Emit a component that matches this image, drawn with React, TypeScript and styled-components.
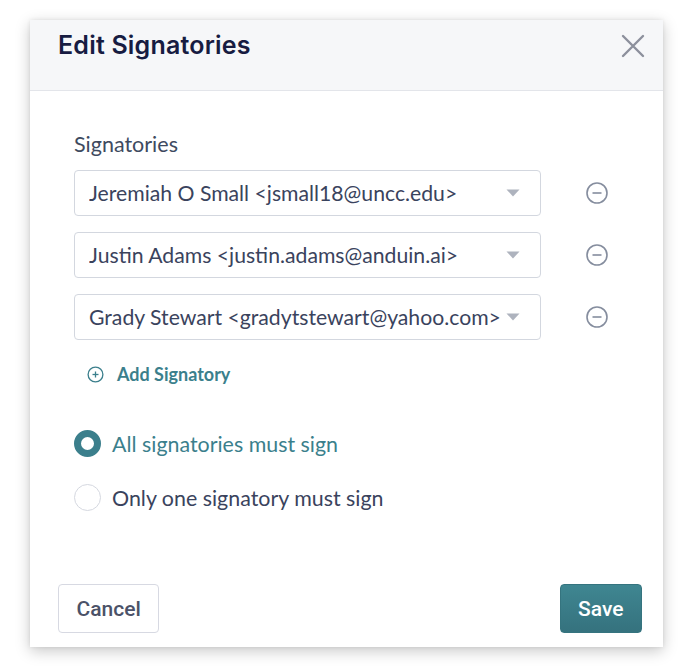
import React from "react";
import styled, { createGlobalStyle } from "styled-components";

const Global = createGlobalStyle`
  html, body { margin: 0; padding: 0; background: #ffffff; }
  body { font-family: Lato, "Noto Sans", sans-serif; }
  * { box-sizing: border-box; }
`;

const Page = styled.div`
  padding: 20px 26px 24px 30px;
`;

const Dialog = styled.div`
  width: 633px;
  background: #ffffff;
  box-shadow: 0 4px 14px rgba(0, 0, 0, 0.22), 0 0 4px rgba(0, 0, 0, 0.08);
  display: flex;
  flex-direction: column;
`;

const Header = styled.div`
  height: 71px;
  background: #f6f7f9;
  border-bottom: 1px solid #e3e5ea;
  display: flex;
  align-items: flex-start;
  justify-content: space-between;
  padding: 10px 16px 0 28px;
`;

const Title = styled.h1`
  margin: 0;
  font-family: Inter, "Noto Sans", sans-serif;
  font-weight: 600;
  font-size: 25px;
  line-height: 30px;
  letter-spacing: 0.2px;
  color: #171c42;
`;

const CloseButton = styled.button`
  border: none;
  background: transparent;
  padding: 0;
  width: 28px;
  height: 28px;
  display: flex;
  align-items: center;
  justify-content: center;
  cursor: pointer;
  margin-top: 2px;
`;

const Body = styled.div`
  padding: 40px 44px 0 44px;
  display: flex;
  flex-direction: column;
`;

const Label = styled.div`
  font-size: 21.5px;
  line-height: 26px;
  color: #3e4a60;
  margin-bottom: 13px;
`;

const Rows = styled.div`
  display: flex;
  flex-direction: column;
  gap: 16px;
`;

const Row = styled.div`
  display: flex;
  align-items: center;
  gap: 44px;
`;

const Select = styled.div`
  width: 467px;
  height: 46px;
  border: 1px solid #d3d7df;
  border-radius: 4px;
  display: flex;
  align-items: center;
  justify-content: space-between;
  padding: 0 20px 0 14px;
  font-size: 21.2px;
  color: #3a435d;
  white-space: nowrap;
`;

const SelectText = styled.span`
  overflow: hidden;
`;

const RemoveButton = styled.button`
  border: none;
  background: transparent;
  padding: 0;
  width: 24px;
  height: 24px;
  display: flex;
  align-items: center;
  justify-content: center;
`;

const AddLink = styled.div`
  display: flex;
  align-items: center;
  gap: 13px;
  margin: 24px 0 0 13px;
  font-size: 18px;
  line-height: 20px;
  font-weight: 700;
  color: #3b7f8c;
`;

const RadioGroup = styled.div`
  display: flex;
  flex-direction: column;
  gap: 27px;
  margin-top: 46px;
`;

const RadioRow = styled.label<{ $checked?: boolean }>`
  display: flex;
  align-items: center;
  gap: 11px;
  font-size: 21.4px;
  line-height: 26px;
  color: ${(p) => (p.$checked ? "#3b7f8c" : "#3a435d")};
`;

const RadioDot = styled.span<{ $checked?: boolean }>`
  width: 27px;
  height: 27px;
  border-radius: 50%;
  flex: none;
  border: ${(p) => (p.$checked ? "7.5px solid #3b7f8c" : "1px solid #d5d8e0")};
  background: #ffffff;
`;

const Footer = styled.div`
  display: flex;
  justify-content: space-between;
  align-items: center;
  padding: 73px 21px 14px 28px;
`;

const Button = styled.button<{ $primary?: boolean }>`
  height: 49px;
  padding: 0 17.5px;
  border-radius: 4px;
  font-family: Roboto, "Noto Sans", sans-serif;
  font-weight: 500;
  font-size: 21px;
  cursor: pointer;
  color: ${(p) => (p.$primary ? "#ffffff" : "#4b5268")};
  background: ${(p) => (p.$primary ? "linear-gradient(#3f8691, #35727e)" : "#ffffff")};
  border: 1px solid ${(p) => (p.$primary ? "#35747f" : "#d7d9e2")};
`;

const Caret = () => (
  <svg width="14" height="8" viewBox="0 0 14 8">
    <path d="M0.5 0.5 L13.5 0.5 L7 7.5 Z" fill="#aeb3be" />
  </svg>
);

const MinusCircle = () => (
  <svg width="24" height="24" viewBox="0 0 24 24">
    <circle cx="12" cy="12" r="10" fill="none" stroke="#858d9e" strokeWidth="1.6" />
    <line x1="7.5" y1="12" x2="16.5" y2="12" stroke="#858d9e" strokeWidth="1.6" />
  </svg>
);

const PlusCircle = () => (
  <svg width="17" height="17" viewBox="0 0 17 17">
    <circle cx="8.5" cy="8.5" r="7.4" fill="none" stroke="#3b7f8c" strokeWidth="1.3" />
    <line x1="5.5" y1="8.5" x2="11.5" y2="8.5" stroke="#3b7f8c" strokeWidth="1.3" />
    <line x1="8.5" y1="5.5" x2="8.5" y2="11.5" stroke="#3b7f8c" strokeWidth="1.3" />
  </svg>
);

const CloseIcon = () => (
  <svg width="24" height="24" viewBox="0 0 24 24">
    <path d="M2 2 L22 22 M22 2 L2 22" stroke="#8c909c" strokeWidth="2.4" strokeLinecap="round" />
  </svg>
);

const signatories = [
  "Jeremiah O Small <jsmall18@uncc.edu>",
  "Justin Adams <justin.adams@anduin.ai>",
  "Grady Stewart <gradytstewart@yahoo.com>",
];

export default function App() {
  return (
    <>
      <Global />
      <Page>
        <Dialog>
          <Header>
            <Title>Edit Signatories</Title>
            <CloseButton aria-label="Close">
              <CloseIcon />
            </CloseButton>
          </Header>
          <Body>
            <Label>Signatories</Label>
            <Rows>
              {signatories.map((s) => (
                <Row key={s}>
                  <Select>
                    <SelectText>{s}</SelectText>
                    <Caret />
                  </Select>
                  <RemoveButton aria-label="Remove">
                    <MinusCircle />
                  </RemoveButton>
                </Row>
              ))}
            </Rows>
            <AddLink>
              <PlusCircle />
              Add Signatory
            </AddLink>
            <RadioGroup>
              <RadioRow $checked>
                <RadioDot $checked />
                All signatories must sign
              </RadioRow>
              <RadioRow>
                <RadioDot />
                Only one signatory must sign
              </RadioRow>
            </RadioGroup>
          </Body>
          <Footer>
            <Button>Cancel</Button>
            <Button $primary>Save</Button>
          </Footer>
        </Dialog>
      </Page>
    </>
  );
}
